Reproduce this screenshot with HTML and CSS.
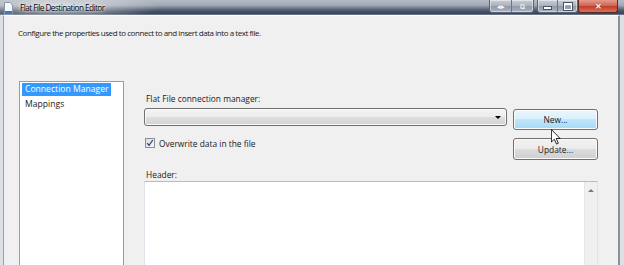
FILE: index.html
```html
<!DOCTYPE html>
<html lang="en">
<head>
    <meta charset="UTF-8">
    <title>Flat File Destination Editor</title>
    <link rel="stylesheet" href="styles.css">
</head>
<body>
    <div class="window">
        <div class="titlebar">
            <svg class="app-icon" width="9" height="13" viewBox="0 0 9 13">
                <path d="M0.5 0.5 H6 L8.5 3 V12.5 H0.5 Z" fill="#f4f6f8" stroke="#8a96a6"/>
                <rect x="1" y="9" width="7" height="3" fill="#3b78c8"/>
            </svg>
            <span class="title">Flat File Destination Editor</span>
            <div class="caption">
                <div class="cap-group extra">
                    <span class="cap">&#9666;&#9656;</span>
                    <span class="cap">&#10697;</span>
                </div>
                <div class="cap-group">
                    <span class="cap"><i class="min-bar"></i></span>
                    <span class="cap"><i class="max-box"></i></span>
                </div>
                <div class="cap-close">&#10005;</div>
            </div>
        </div>

        <div class="frame">
            <div class="client">
                <p class="intro">Configure the properties used to connect to and insert data into a text file.</p>

                <div class="main">
                    <ul class="nav">
                        <li class="selected"><span>Connection Manager</span></li>
                        <li><span>Mappings</span></li>
                    </ul>

                    <div class="panel">
                        <label class="field-label">Flat File connection manager:</label>
                        <div></div>

                        <div class="combo"><span class="combo-arrow"></span></div>
                        <button class="btn hover">New...</button>

                        <label class="check">
                            <span class="check-box">
                                <svg width="8" height="8" viewBox="0 0 8 8"><path d="M1.2 4.2 L3 6.4 L6.8 1" fill="none" stroke="#2e4a8a" stroke-width="1.3"/></svg>
                            </span>
                            Overwrite data in the file
                        </label>
                        <button class="btn">Update...</button>

                        <label class="field-label wide">Header:</label>

                        <div class="textbox wide">
                            <div class="vscroll"><span class="up-arrow"></span></div>
                        </div>
                    </div>
                </div>
            </div>
        </div>

        <svg class="cursor" width="10" height="16" viewBox="0 0 12 19">
            <path d="M0.5 0.5 V15.5 L4 12.2 L6.6 18 L8.8 17 L6.3 11.3 H11 Z" fill="#fff" stroke="#000" stroke-width="1"/>
        </svg>
    </div>
</body>
</html>
```

FILE: styles.css
```css
body {
    margin: 0;
    font-family: "Open Sans", "Noto Sans", sans-serif;
    color: #1a1a1a;
}

.window {
    position: relative;
    width: 624px;
    height: 265px;
    overflow: hidden;
    display: flex;
    flex-direction: column;
    background: #d3d8df;
}

/* Title bar */
.titlebar {
    height: 18px;
    display: flex;
    align-items: flex-start;
    background:
        radial-gradient(ellipse 100px 14px at 60px 7px, rgba(255, 255, 255, 0.6), rgba(255, 255, 255, 0)),
        linear-gradient(to bottom, #b4bbc5 0%, #a2a9b4 35%, #6c7789 55%, #435066 75%, #3c475b 90%, #7f8998 100%);
}

.app-icon {
    margin: 2px 0 0 4px;
}

.title {
    margin: 2px 0 0 7px;
    font-size: 8.2px;
    letter-spacing: -0.55px;
    line-height: 12px;
    color: #000;
    text-shadow: 0 0 4px #fff, 0 0 2px #fff;
}

.caption {
    margin-left: auto;
    margin-right: 6px;
    display: flex;
    gap: 3px;
}

.cap-group {
    display: flex;
    height: 12px;
    border: 1px solid #5d6676;
    border-top: none;
    border-radius: 0 0 3px 3px;
    background: linear-gradient(to bottom, #c9ced6, #a9b1bd 50%, #8e98a7 50%, #aab3bf);
    box-shadow: inset 0 0 0 1px rgba(255, 255, 255, 0.45);
}

.cap {
    width: 19px;
    display: flex;
    align-items: center;
    justify-content: center;
    font-size: 7px;
    color: #fff;
    border-right: 1px solid #6d7585;
}

.cap:last-child {
    border-right: none;
}

.extra .cap {
    width: 21px;
}

.min-bar {
    width: 7px;
    height: 2px;
    margin-top: 4px;
    background: #fff;
    border: 1px solid #4a5363;
}

.max-box {
    width: 6px;
    height: 4px;
    border: 1px solid #fff;
    border-top-width: 2px;
    outline: 1px solid #4a5363;
}

.cap-close {
    width: 38px;
    height: 12px;
    margin-left: -3px;
    border: 1px solid #5a2a24;
    border-top: none;
    border-radius: 0 0 3px 3px;
    background: linear-gradient(to bottom, #e49a8b, #d0614f 50%, #c13a25 50%, #d4735f);
    color: #fff;
    font-size: 8px;
    font-weight: bold;
    line-height: 12px;
    text-align: center;
    text-shadow: 0 0 1px #5a1a10;
}

/* Window frame and client area */
.frame {
    flex: 1;
    display: flex;
    padding: 0 4px 0 3px;
    background: #dde1e6;
}

.client {
    flex: 1;
    background: #f0f0f0;
    border-left: 1px solid #9ba1aa;
    border-right: 2px solid #8d9299;
    border-top: 1px solid #fdfdfd;
    padding: 11px 0 0 14px;
}

.intro {
    margin: 0;
    font-size: 8px;
    letter-spacing: -0.44px;
    line-height: 12px;
}

.main {
    display: grid;
    grid-template-columns: 105px 454px;
    column-gap: 20px;
    margin: 42px 0 0 1px;
}

/* Left list */
.nav {
    list-style: none;
    margin: 0;
    padding: 1px 2px;
    height: 200px;
    background: #fff;
    border: 1px solid #9a9c9f;
    font-size: 8.6px;
    line-height: 13px;
}

.nav li {
    margin-bottom: 2px;
}

.nav li span {
    display: inline-block;
    padding: 0 2px 0 3px;
}

.nav li.selected span {
    background: #3399ff;
    color: #fff;
}

/* Right panel */
.panel {
    display: grid;
    grid-template-columns: 363px 85px;
    grid-template-rows: 16px 30px 30px 13px 100px;
    column-gap: 6px;
    margin-top: 11px;
    font-size: 8.4px;
}

.field-label {
    line-height: 13px;
    padding-left: 2px;
}

.wide {
    grid-column: span 2;
}

.combo {
    height: 18px;
    box-sizing: border-box;
    border: 1px solid #707070;
    border-radius: 3px;
    background: linear-gradient(to bottom, #f3f3f3, #ececec 50%, #dedede 50%, #d3d3d3);
    box-shadow: inset 0 0 0 1px #fafafa;
    display: flex;
    align-items: center;
    justify-content: flex-end;
    padding-right: 5px;
}

.combo-arrow {
    width: 0;
    height: 0;
    border-left: 3px solid transparent;
    border-right: 3px solid transparent;
    border-top: 3px solid #000;
}

.btn {
    height: 22px;
    border: 1px solid #707070;
    border-radius: 3px;
    background: linear-gradient(to bottom, #f2f2f2, #ebebeb 50%, #dddddd 50%, #cfcfcf);
    box-shadow: inset 0 0 0 1px #fbfbfb;
    font-family: inherit;
    font-size: 8.4px;
    color: #1a1a1a;
    padding: 0;
}

.btn.hover {
    margin-top: 1px;
    height: 21px;
    border-color: #3c7fb1;
    background: linear-gradient(to bottom, #eaf6fd, #d9f0fc 50%, #bee6fd 50%, #a7d9f5);
}

.check {
    display: flex;
    align-items: flex-start;
    gap: 4px;
    line-height: 11px;
    padding-left: 1px;
}

.check-box {
    width: 10px;
    height: 10px;
    box-sizing: border-box;
    border: 1px solid #8e8f8f;
    background: linear-gradient(135deg, #dcdcdc, #fafafa);
    display: flex;
    align-items: center;
    justify-content: center;
}

.textbox {
    box-sizing: border-box;
    background: #fff;
    border: 1px solid #e2e3ea;
    border-top-color: #b9bcc2;
    display: flex;
    justify-content: flex-end;
}

.vscroll {
    width: 12px;
    background: #f0f0f0;
    border-left: 1px solid #e6e6e6;
    display: flex;
    justify-content: center;
}

.up-arrow {
    margin-top: 7px;
    width: 0;
    height: 0;
    border-left: 3px solid transparent;
    border-right: 3px solid transparent;
    border-bottom: 3px solid #7a7a7a;
}

/* Mouse pointer over the New button */
.cursor {
    position: absolute;
    left: 551px;
    top: 129px;
}
```
